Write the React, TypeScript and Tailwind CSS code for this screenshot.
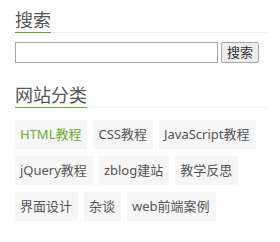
import React from "react";

const tags = [
  ["HTML教程", true],
  ["CSS教程", false],
  ["JavaScript教程", false],
  ["jQuery教程", false],
  ["zblog建站", false],
  ["教学反思", false],
  ["界面设计", false],
  ["杂谈", false],
  ["web前端案例", false],
] as const;

export default function App() {
  return (
    <div
      className="w-[280px] h-[242px] bg-white pl-[15px] pr-[13px] pt-[8px]"
      style={{ fontFamily: '"Microsoft YaHei", "Noto Sans", "Noto Sans CJK SC", sans-serif' }}
    >
      <div className="border-b border-[#eeeeee] flex">
        <h3 className="text-[18px] leading-[24px] text-[#555] border-b border-[#6aab2c] -mb-px font-normal">
          搜索
        </h3>
      </div>
      <div className="flex items-center mt-[9px] gap-[3px]">
        <input
          type="text"
          className="w-[203px] h-[21px] border border-[#a9a9a9] bg-white outline-none"
        />
        <button className="h-[21px] w-[38px] border border-[#a9a9a9] rounded-[2px] bg-[#eeeeee] text-[13px] leading-[19px] text-[#333]">
          搜索
        </button>
      </div>
      <div className="border-b border-[#eeeeee] flex mt-[20px]">
        <h3 className="text-[18px] leading-[24px] text-[#555] border-b border-[#6aab2c] -mb-px font-normal">
          网站分类
        </h3>
      </div>
      <div className="flex flex-wrap gap-x-[6px] gap-y-[7px] mt-[12px]">
        {tags.map(([t, active]) => (
          <span
            key={t}
            className={`h-[29px] pl-[5px] pr-[6px] bg-[#f6f6f6] text-[13px] leading-[29px] ${active ? "text-[#6aab2c]" : "text-[#555]"}`}
          >
            {t}
          </span>
        ))}
      </div>
    </div>
  );
}
